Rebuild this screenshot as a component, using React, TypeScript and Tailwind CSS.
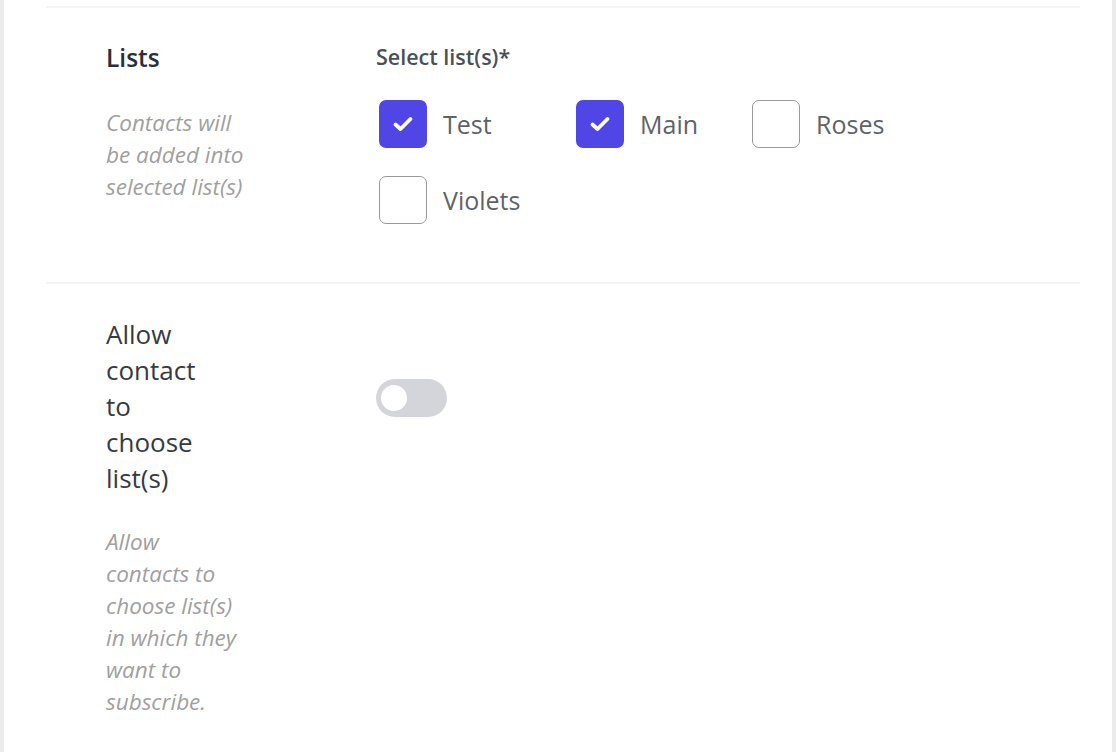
import React from "react";

const font = { fontFamily: '"Open Sans", "Noto Sans", sans-serif' };

function Check({ label, checked, w }: { label: string; checked: boolean; w: string }) {
  return (
    <div className={`flex items-center ${w}`}>
      {checked ? (
        <div className="w-[48px] h-[48px] rounded-[7px] bg-[#4f46e5] flex items-center justify-center shrink-0">
          <svg width="22" height="18" viewBox="0 0 22 18" fill="none">
            <path d="M3.5 9.5l5 4.5L18.5 4" stroke="white" strokeWidth="3.8" strokeLinecap="round" strokeLinejoin="round" />
          </svg>
        </div>
      ) : (
        <div className="w-[48px] h-[48px] rounded-[7px] border-[1.5px] border-[#9a9a9a] bg-white shrink-0" />
      )}
      <span className="ml-4 text-[25px] leading-[36px] text-[#5f6368]">{label}</span>
    </div>
  );
}

function Lines({ lines }: { lines: string[] }) {
  return (
    <>
      {lines.map((l) => (
        <div key={l} className="whitespace-nowrap">
          {l}
        </div>
      ))}
    </>
  );
}

export default function App() {
  return (
    <div className="w-[1116px] h-[752px] bg-[#ebebeb] overflow-hidden px-[4px]" style={font}>
      <div className="h-full bg-white pl-[42px] pr-[32px] pt-[6px]">
        <div className="border-t-2 border-[#f4f4f5] flex pl-[60px] pt-[32px] pb-[58px]">
          <div className="w-[270px] shrink-0">
            <div className="text-[24.5px] leading-[36px] font-semibold text-[#2a303b]">Lists</div>
            <div className="mt-[31px] text-[22.5px] leading-[32px] italic text-[#a0a0a0]">
              <Lines lines={["Contacts will", "be added into", "selected list(s)"]} />
            </div>
          </div>
          <div className="pt-[1px]">
            <div className="text-[21.5px] leading-[32px] font-semibold text-[#4b5058]">Select list(s)*</div>
            <div className="mt-[27px] ml-[3px] w-[560px] flex flex-wrap gap-y-[28px]">
              <Check label="Test" checked w="w-[197px]" />
              <Check label="Main" checked w="w-[176px]" />
              <Check label="Roses" checked={false} w="w-[176px]" />
              <Check label="Violets" checked={false} w="w-[176px]" />
            </div>
          </div>
        </div>
        <div className="border-t-2 border-[#f4f4f5] flex pl-[60px] pt-[32px]">
          <div className="w-[270px] shrink-0">
            <div className="text-[26px] leading-[36px] font-medium text-[#353b45]">
              <Lines lines={["Allow", "contact", "to", "choose", "list(s)"]} />
            </div>
            <div className="mt-[30px] text-[22.5px] leading-[32px] italic text-[#a0a0a0]">
              <Lines lines={["Allow", "contacts to", "choose list(s)", "in which they", "want to", "subscribe."]} />
            </div>
          </div>
          <div className="pt-[63px]">
            <div className="w-[71px] h-[38px] rounded-full bg-[#d4d5da] flex items-center pl-[5px]">
              <div className="w-[26px] h-[26px] rounded-full bg-white" />
            </div>
          </div>
        </div>
      </div>
    </div>
  );
}
